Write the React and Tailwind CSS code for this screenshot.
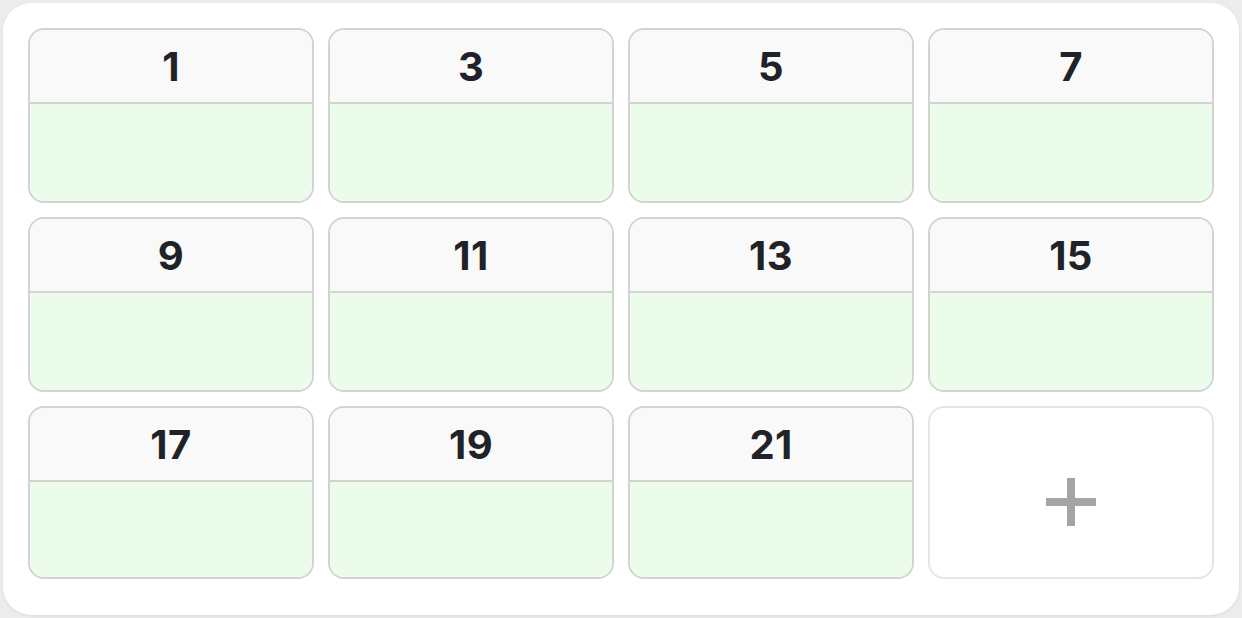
const days = [1, 3, 5, 7, 9, 11, 13, 15, 17, 19, 21]

function DayCell({ n }) {
  return (
    <div className="flex flex-col overflow-hidden rounded-[16px] border-2 border-[#d3d3d3]">
      <div className="flex h-[74px] shrink-0 items-center justify-center border-b-2 border-[#d3d3d3] bg-[#f9f9f9] pt-[2px]">
        <span className="text-[40px] font-bold leading-none tracking-[0.01em] text-[#1f2328]">{n}</span>
      </div>
      <div className="flex-1 bg-[#ebfcea]" />
    </div>
  )
}

export default function App() {
  return (
    <div className="h-[618px] w-[1242px] bg-[#ececec] p-[3px]" style={{ fontFamily: 'Inter, "Noto Sans", sans-serif' }}>
      <div className="h-full rounded-[28px] bg-white px-[25px] pt-[25px] shadow-[0_1px_3px_rgba(0,0,0,0.08)]">
        <div className="grid grid-cols-4 grid-rows-[175px_175px_173px] gap-[14px]">
          {days.map((n) => <DayCell key={n} n={n} />)}
          <button className="flex items-center justify-center rounded-[16px] border-2 border-[#e6e6e6] bg-white pt-[18px]">
            <svg width="50" height="48" viewBox="0 0 50 48">
              <rect x="21" y="0" width="8" height="48" fill="#a5a5a5" />
              <rect x="0" y="20" width="50" height="8" fill="#a5a5a5" />
            </svg>
          </button>
        </div>
      </div>
    </div>
  )
}
